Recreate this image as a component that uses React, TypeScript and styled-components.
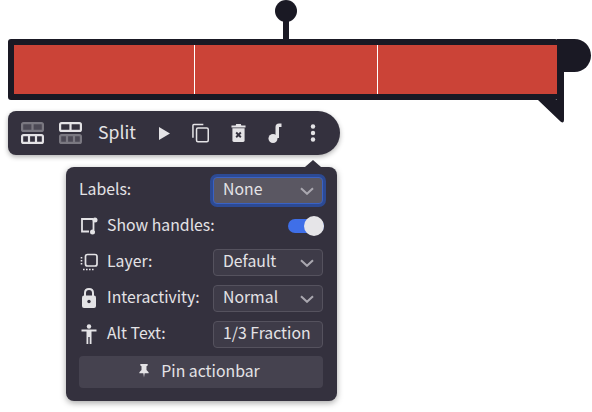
import React from "react";
import styled, { createGlobalStyle } from "styled-components";

const Global = createGlobalStyle`
  html, body { margin: 0; padding: 0; background: #fff; }
  body { font-family: "Noto Sans CJK SC", "Noto Sans", sans-serif; width: 592px; height: 412px; overflow: hidden; }
`;

const Page = styled.div`
  width: 592px;
  height: 412px;
  padding: 39px 0 0 8px;
  box-sizing: border-box;
  display: flex;
  flex-direction: column;
`;

const Fraction = styled.div`
  position: relative;
  width: 550px;
  height: 61px;
  box-sizing: border-box;
  border: 6px solid #1a1924;
  border-right-width: 1px;
  border-radius: 3px;
  background: #1a1924;
  display: flex;
`;

const Segment = styled.div<{ $w: number }>`
  width: ${(p) => p.$w}px;
  flex: none;
  box-sizing: border-box;
  background: #cb4337;
  & + & { border-left: 1px solid #fff; }
`;

const Knob = styled.div`
  position: absolute;
  left: 261px;
  top: -45px;
  width: 22px;
  height: 22px;
  border-radius: 50%;
  background: #1a1924;
`;

const Stem = styled.div`
  position: absolute;
  left: 269px;
  top: -26px;
  width: 6px;
  height: 26px;
  background: #1a1924;
`;

const Ear = styled.div`
  position: absolute;
  left: 543px;
  top: -6px;
  width: 34px;
  height: 33px;
  border-radius: 0 16.5px 16.5px 0;
  background: #1a1924;
`;

const Tail = styled.svg`
  position: absolute;
  left: 524px;
  top: 27px;
  display: block;
`;

const Toolbar = styled.div`
  margin-top: 11px;
  width: 332px;
  height: 44px;
  box-sizing: border-box;
  background: #34313e;
  border-radius: 8px 22px 22px 8px;
  box-shadow: 0 2px 5px rgba(0, 0, 0, 0.3);
  display: flex;
  align-items: center;
  padding-left: 13px;
  color: #e4e3e6;
`;

const ToolIcon = styled.div<{ $w: number; $ml: number }>`
  width: ${(p) => p.$w}px;
  margin-left: ${(p) => p.$ml}px;
  height: 24px;
  display: flex;
  align-items: center;
  justify-content: center;
  flex: none;
`;

const SplitLabel = styled.div`
  margin-left: 16px;
  width: 38px;
  padding-bottom: 3px;
  font-size: 17.6px;
  line-height: 24px;
  flex: none;
`;

const Popover = styled.div`
  position: relative;
  margin: 12px 0 0 58px;
  width: 271px;
  height: 234px;
  box-sizing: border-box;
  padding: 5px 14px 0 13px;
  background: #34313e;
  border-radius: 8px;
  box-shadow: 0 2px 6px rgba(0, 0, 0, 0.35);
  color: #e4e3e6;
  display: flex;
  flex-direction: column;
`;

const Arrow = styled.div`
  position: absolute;
  right: 16px;
  top: -7px;
  width: 0;
  height: 0;
  border-left: 8px solid transparent;
  border-right: 8px solid transparent;
  border-bottom: 7px solid #34313e;
`;

const Row = styled.div`
  height: 36px;
  display: flex;
  align-items: center;
  flex: none;
  font-size: 15.8px;
`;

const RowIcon = styled.div`
  width: 18px;
  height: 20px;
  margin: 0 9px 0 1px;
  display: flex;
  align-items: center;
  justify-content: center;
  flex: none;
`;

const RowLabel = styled.div`
  flex: 1;
  white-space: nowrap;
  padding-bottom: 4px;
`;

const Select = styled.div<{ $focus?: boolean }>`
  width: 110px;
  height: 27px;
  box-sizing: border-box;
  border-radius: 4px;
  padding: 0 8px 4px 9px;
  display: flex;
  align-items: center;
  justify-content: space-between;
  font-size: 15.8px;
  white-space: nowrap;
  background: ${(p) => (p.$focus ? "#5a5762" : "#3e3b48")};
  border: 1px solid ${(p) => (p.$focus ? "#3a62c4" : "#55525e")};
  box-shadow: ${(p) => (p.$focus ? "0 0 0 3px #2c4a94" : "none")};
`;

const ChevronMark = styled.svg`
  display: block;
  margin-top: 6px;
  flex: none;
`;

const Switch = styled.div`
  position: relative;
  width: 36px;
  height: 14px;
  margin-right: -1px;
  border-radius: 7px;
  background: #3f6fe8;
`;

const Thumb = styled.div`
  position: absolute;
  right: 0;
  top: -3px;
  width: 20px;
  height: 20px;
  border-radius: 50%;
  background: #e6e5e8;
`;

const PinButton = styled.div`
  margin-top: 4px;
  height: 32px;
  padding: 0 4px 3px 0;
  box-sizing: border-box;
  flex: none;
  border-radius: 4px;
  background: #45424f;
  display: flex;
  align-items: center;
  justify-content: center;
  gap: 11px;
  font-size: 15.8px;
`;

const Chevron = () => (
  <ChevronMark width="14" height="8" viewBox="0 0 14 8" fill="none">
    <path d="M1 1.2 L7 6.8 L13 1.2" stroke="#aaa8b0" strokeWidth="2" />
  </ChevronMark>
);

const SplitIcon = ({ top }: { top: boolean }) => {
  const dim = { opacity: 0.4, fill: "#e4e3e6", fillOpacity: 0.35 };
  const on = { opacity: 1, fill: "none", fillOpacity: 1 };
  const a = top ? dim : on;
  const b = top ? on : dim;
  return (
    <svg width="23" height="22" viewBox="0 0 23 22" stroke="#e4e3e6" strokeWidth="2.2">
      <g {...a}>
        <rect x="1.1" y="1.1" width="20.8" height="7.8" rx="1.5" />
        <path d="M11.5 1v8" />
      </g>
      <g {...b}>
        <rect x="1.1" y="13.1" width="20.8" height="7.8" rx="1.5" />
        <path d="M8 13v8M15 13v8" />
      </g>
    </svg>
  );
};

export default function App() {
  return (
    <Page>
      <Global />
      <Fraction>
        <Knob />
        <Stem />
        <Segment $w={180} />
        <Segment $w={183} />
        <Segment $w={180} />
        <Ear />
        <Tail width="27" height="52" viewBox="0 0 27 52">
          <path d="M19 0 H26 V48 Q26 52 22.5 49.5 L0 28 H19 Z" fill="#1a1924" />
        </Tail>
      </Fraction>
      <Toolbar>
        <ToolIcon $w={23} $ml={0}>
          <SplitIcon top={true} />
        </ToolIcon>
        <ToolIcon $w={23} $ml={15}>
          <SplitIcon top={false} />
        </ToolIcon>
        <SplitLabel>Split</SplitLabel>
        <ToolIcon $w={13} $ml={22}>
          <svg width="13" height="15" viewBox="0 0 13 15">
            <path d="M1 1 L12 7.5 L1 14 Z" fill="#e4e3e6" />
          </svg>
        </ToolIcon>
        <ToolIcon $w={17} $ml={21}>
          <svg width="17" height="20" viewBox="0 0 18 20" fill="none" stroke="#e4e3e6" strokeWidth="1.6">
            <path d="M1 15 V2 Q1 1 2 1 H12" />
            <rect x="4.8" y="4.8" width="12.4" height="14.4" rx="1.5" />
          </svg>
        </ToolIcon>
        <ToolIcon $w={15} $ml={22}>
          <svg width="15" height="20" viewBox="0 0 16 20">
            <path d="M5.5 0.5 H10.5 L11 2 H15.5 V4 H0.5 V2 H5 Z" fill="#e4e3e6" />
            <path d="M1.5 5 H14.5 V18 Q14.5 19.5 13 19.5 H3 Q1.5 19.5 1.5 18 Z" fill="#e4e3e6" />
            <path d="M5.5 9.5 L10.5 14.5 M10.5 9.5 L5.5 14.5" stroke="#34313e" strokeWidth="2" />
          </svg>
        </ToolIcon>
        <ToolIcon $w={14} $ml={22}>
          <svg width="14" height="20" viewBox="0 0 14 20">
            <circle cx="5" cy="15.5" r="4.5" fill="#e4e3e6" />
            <path d="M7.5 15 V4 Q7.5 0.5 11 0.5 H13.5 V4 H11 V15 Z" fill="#e4e3e6" />
          </svg>
        </ToolIcon>
        <ToolIcon $w={6} $ml={28}>
          <svg width="6" height="18" viewBox="0 0 6 18" fill="#e4e3e6">
            <circle cx="3" cy="2.5" r="2.2" />
            <circle cx="3" cy="9" r="2.2" />
            <circle cx="3" cy="15.5" r="2.2" />
          </svg>
        </ToolIcon>
      </Toolbar>
      <Popover>
        <Arrow />
        <Row>
          <RowLabel>Labels:</RowLabel>
          <Select $focus>
            None
            <Chevron />
          </Select>
        </Row>
        <Row>
          <RowIcon>
            <svg width="18" height="18" viewBox="0 0 18 18" fill="none">
              <path d="M13 2 H2 V14.5 H9" stroke="#e4e3e6" strokeWidth="1.8" />
              <path d="M13.5 3 V13" stroke="#e4e3e6" strokeWidth="1.8" />
              <circle cx="15" cy="3" r="2.5" fill="#e4e3e6" />
              <circle cx="12.5" cy="15" r="2.5" fill="#e4e3e6" />
            </svg>
          </RowIcon>
          <RowLabel>Show handles:</RowLabel>
          <Switch>
            <Thumb />
          </Switch>
        </Row>
        <Row>
          <RowIcon>
            <svg width="18" height="18" viewBox="0 0 18 18" fill="none" stroke="#e4e3e6">
              <rect x="5.5" y="1.5" width="11.5" height="11.5" rx="2" strokeWidth="1.7" />
              <path d="M1.5 4 V13 M3 16.5 H15" strokeWidth="1.6" strokeDasharray="1.6 1.4" />
            </svg>
          </RowIcon>
          <RowLabel>Layer:</RowLabel>
          <Select>
            Default
            <Chevron />
          </Select>
        </Row>
        <Row>
          <RowIcon>
            <svg width="16" height="20" viewBox="0 0 16 20">
              <path d="M4 8 V5 Q4 1 8 1 Q12 1 12 5 V8" fill="none" stroke="#e4e3e6" strokeWidth="2" />
              <rect x="1" y="7.5" width="14" height="12.5" rx="2" fill="#e4e3e6" />
              <circle cx="8" cy="13.5" r="1.7" fill="#34313e" />
            </svg>
          </RowIcon>
          <RowLabel>Interactivity:</RowLabel>
          <Select>
            Normal
            <Chevron />
          </Select>
        </Row>
        <Row>
          <RowIcon>
            <svg width="16" height="20" viewBox="0 0 16 20" fill="#e4e3e6">
              <circle cx="8" cy="2.5" r="2.2" />
              <path d="M0.5 5.5 H15.5 V7.5 H10.5 V20 H8.7 V13 H7.3 V20 H5.5 V7.5 H0.5 Z" />
            </svg>
          </RowIcon>
          <RowLabel>Alt Text:</RowLabel>
          <Select>1/3 Fraction</Select>
        </Row>
        <PinButton>
          <svg width="12" height="15" viewBox="0 0 13 15" fill="#e4e3e6">
            <path d="M2.5 0.5 H10.5 V2 L9.2 3 V7 L11.5 9.5 V10.5 H7.2 L6.5 15 L5.8 10.5 H1.5 V9.5 L3.8 7 V3 L2.5 2 Z" />
          </svg>
          Pin actionbar
        </PinButton>
      </Popover>
    </Page>
  );
}
